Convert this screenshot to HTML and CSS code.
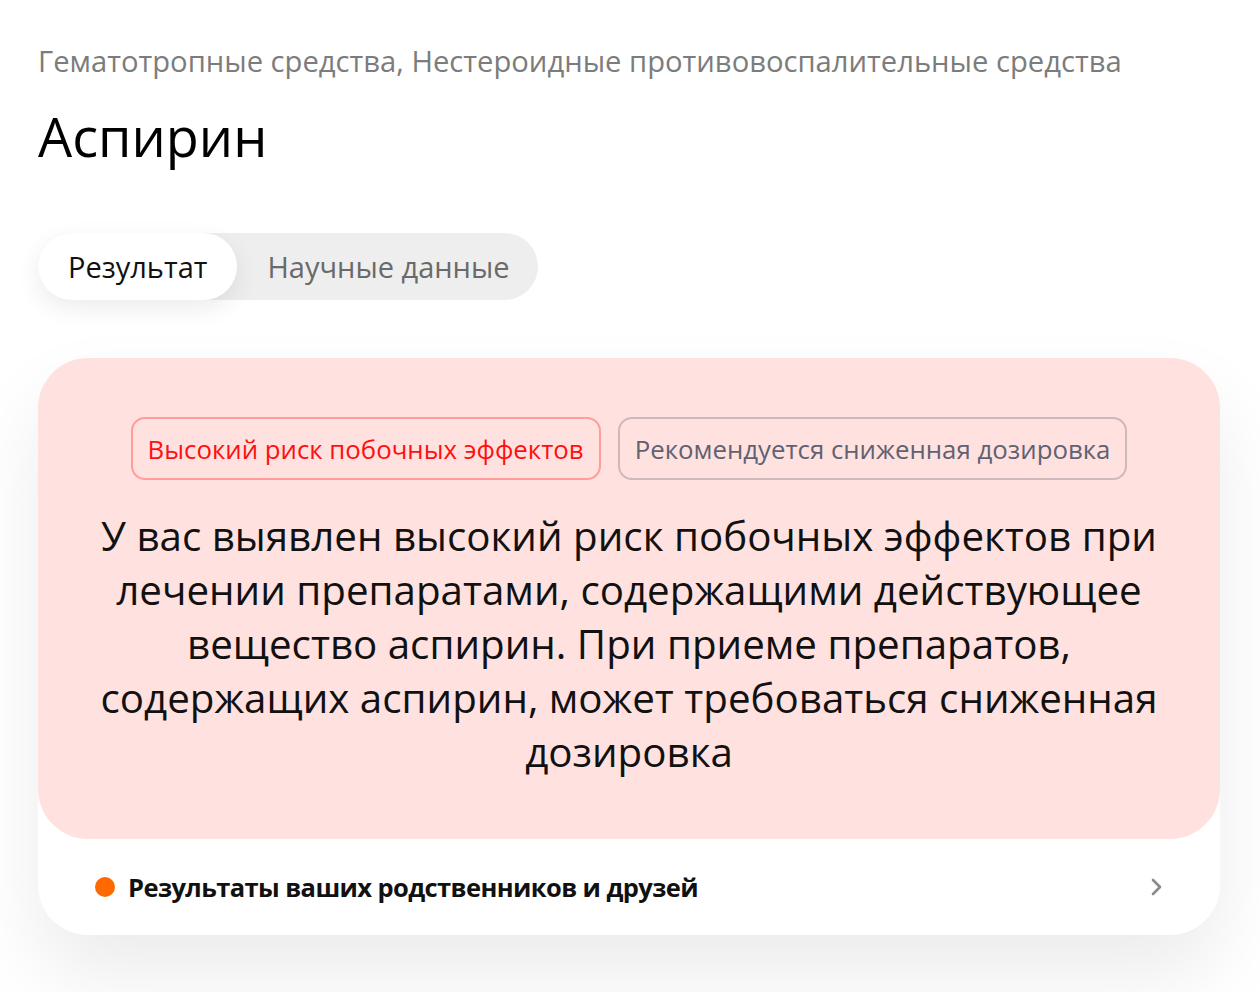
FILE: index.html
```html
<!DOCTYPE html>
<html lang="ru">
<head>
<meta charset="utf-8">
<link rel="stylesheet" href="styles.css">
</head>
<body>
<div class="page">
  <div class="crumbs">Гематотропные средства, Нестероидные противовоспалительные средства</div>
  <h1 class="title">Аспирин</h1>
  <div class="tabs">
    <div class="tab active">Результат</div>
    <div class="tab">Научные данные</div>
  </div>
  <div class="card">
    <div class="result">
      <div class="badges">
        <span class="badge red">Высокий риск побочных эффектов</span>
        <span class="badge gray">Рекомендуется сниженная дозировка</span>
      </div>
      <p class="text">У вас выявлен высокий риск побочных эффектов при лечении препаратами, содержащими действующее вещество аспирин. При приеме препаратов, содержащих аспирин, может требоваться сниженная дозировка</p>
    </div>
    <div class="row">
      <span class="dot"></span>
      <span class="row-label">Результаты ваших родственников и друзей</span>
      <svg class="chev" width="14" height="22" viewBox="0 0 14 22"><path d="M3 4 L10 11 L3 18" fill="none" stroke="#8a8a8a" stroke-width="2.6" stroke-linecap="round" stroke-linejoin="round"/></svg>
    </div>
  </div>
</div>
</body>
</html>
```
FILE: styles.css
```css
* { box-sizing: border-box; }
html, body { margin: 0; padding: 0; background: #fff; }
body {
  font-family: "Open Sans", "Noto Sans", sans-serif;
  color: #111;
  min-height: 992px;
}
.page { padding: 37px 38px 40px 38px; width: 1260px; }
.crumbs {
  font-size: 29.2px;
  line-height: 44px;
  color: #7c7c7c;
  margin-top: 2px;
  margin-bottom: -2px;
}
.title {
  font-weight: 400;
  font-size: 54px;
  line-height: 70px;
  margin: 20px 0 0 0;
  color: #000;
}
.tabs {
  display: inline-flex;
  margin-top: 62px;
  background: #eeeeee;
  border-radius: 34px;
  height: 67px;
}
.tab {
  display: flex;
  align-items: center;
  font-size: 29px;
  color: #6a6a6a;
  padding: 0 30px;
  border-radius: 34px;
}
.tab:last-child { padding-right: 28px; }
.tab.active {
  background: #fff;
  color: #111;
  box-shadow: 0 8px 24px rgba(0,0,0,0.08);
}
.card {
  margin-top: 58px;
  width: 1182px;
  background: #fff;
  border-radius: 50px;
  box-shadow: 0 40px 80px rgba(0,0,0,0.08);
}
.result {
  background: #ffe1df;
  border-radius: 50px;
  padding: 59px 50px 60px;
  text-align: center;
}
.badges { display: flex; justify-content: center; gap: 17px; }
.badge {
  font-size: 25.8px;
  height: 63px;
  display: inline-flex;
  align-items: center;
  padding: 0 15px;
  border-radius: 14px;
  border: 2px solid;
}
.badge.red { color: #ff1010; border-color: #ff9d9d; }
.badge.gray { color: #5f6272; border-color: #cdb9bb; }
.text {
  margin: 29px 0 0;
  font-size: 40.3px;
  line-height: 54px;
  color: #111;
}
.row {
  display: flex;
  align-items: center;
  height: 96px;
  padding: 0 56px 0 57px;
}
.dot { width: 20px; height: 20px; border-radius: 50%; background: #ff6a00; }
.row-label { margin-left: 13px; font-size: 25.5px; font-weight: 700; letter-spacing: -0.6px; color: #111; flex: 1; }
.chev { display: block; }
```
